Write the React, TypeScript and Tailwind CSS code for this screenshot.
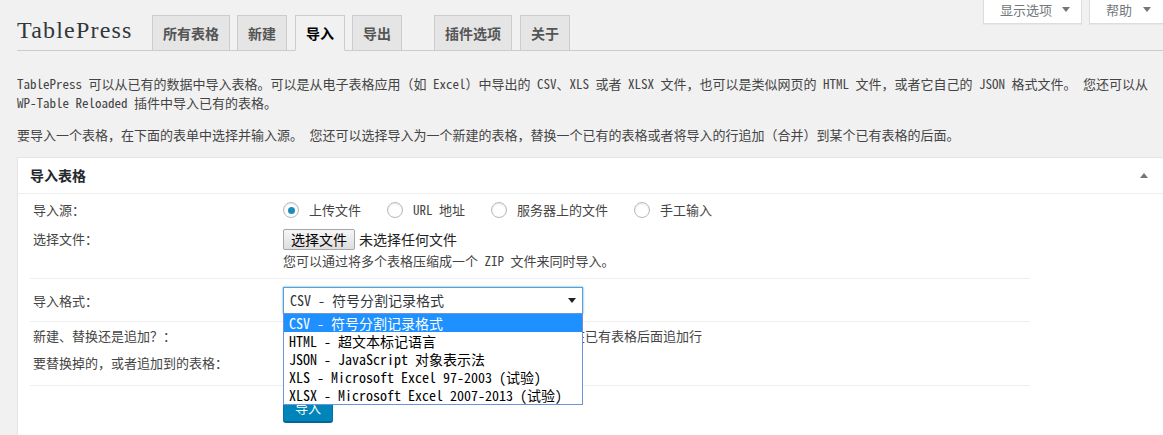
const mono = "font-['Noto_Sans_Mono_CJK_SC','Liberation_Mono','Noto_Sans_CJK_SC',monospace]";
const sans = "font-['Noto_Sans_CJK_SC','Noto_Sans',sans-serif]";

const tabs = [
    { label: "所有表格", gap: "ml-0" },
    { label: "新建", gap: "ml-[7px]" },
    { label: "导入", gap: "ml-[8px]", active: true },
    { label: "导出", gap: "ml-[7px]" },
    { label: "插件选项", gap: "ml-[32px]" },
    { label: "关于", gap: "ml-[8px]" },
];

const formats = [
    "CSV - 符号分割记录格式",
    "HTML - 超文本标记语言",
    "JSON - JavaScript 对象表示法",
    "XLS - Microsoft Excel 97-2003 (试验)",
    "XLSX - Microsoft Excel 2007-2013 (试验)",
];

const Radio = ({ checked = false }: { checked?: boolean }) => (
    <span className="w-[16px] h-[16px] shrink-0 rounded-full border border-[#b4b9be] bg-white shadow-[inset_0_1px_2px_rgba(0,0,0,0.1)] flex items-center justify-center">
        {checked && <span className="w-[7px] h-[7px] rounded-full bg-[#1e8cbe]" />}
    </span>
);

const RadioGroup = ({ items, gaps, checkFirst = false }: { items: string[]; gaps: string[]; checkFirst?: boolean }) => (
    <div className="flex items-center">
        {items.map((item, i) => (
            <div key={item} className={`flex items-center ${gaps[i]}`}>
                <Radio checked={checkFirst && i === 0} />
                <span className="ml-[10px] whitespace-nowrap">{item}</span>
            </div>
        ))}
    </div>
);

const Caret = ({ up = false }: { up?: boolean }) => (
    <svg width="8" height="5" viewBox="0 0 8 5" className="shrink-0">
        <path d={up ? "M0 5 L4 0 L8 5 Z" : "M0 0 L8 0 L4 5 Z"} fill="#72777c" />
    </svg>
);

const Label = ({ children }: { children: React.ReactNode }) => (
    <div className="w-[253px] shrink-0 pl-[3px] whitespace-nowrap">{children}</div>
);

export default function App() {
    return (
        <div className={`${mono} w-full h-[435px] overflow-hidden bg-[#f1f1f1] text-[13px] text-[#444]`}>
            {/* top bar: title, tabs and screen options */}
            <div className="ml-[17px] h-[51px] flex items-end border-b border-[#ccc]">
                <h1 className="self-start mt-[18px] w-[135px] shrink-0 h-[24px] leading-[24px] text-[24px] tracking-[1.2px] font-normal text-[#32373c] font-['Liberation_Serif',serif]">
                    TablePress
                </h1>
                {tabs.map((tab) => (
                    <div
                        key={tab.label}
                        className={`${tab.gap} ${sans} h-[36px] mb-[-1px] px-[10px] flex items-center border border-[#ccc] text-[14px] font-bold ${
                            tab.active ? "bg-[#f1f1f1] border-b-[#f1f1f1] text-black" : "bg-[#e5e5e5] text-[#555]"
                        }`}
                    >
                        {tab.label}
                    </div>
                ))}
                <div className="ml-auto self-start flex mr-[-3px]">
                    <div className="w-[99px] h-[24px] pl-[16px] pt-[1px] flex items-start gap-[10px] bg-white border border-t-0 border-[#ddd] shadow-[0_1px_1px_rgba(0,0,0,0.04)] text-[#72777c] leading-[17px]">
                        <span>显示选项</span>
                        <span className="mt-[6px]"><Caret /></span>
                    </div>
                    <div className="ml-[7px] w-[77px] h-[24px] pl-[16px] pt-[1px] flex items-start gap-[11px] bg-white border border-t-0 border-[#ddd] shadow-[0_1px_1px_rgba(0,0,0,0.04)] text-[#72777c] leading-[17px]">
                        <span>帮助</span>
                        <span className="mt-[6px]"><Caret /></span>
                    </div>
                </div>
            </div>

            <div className="pl-[17px]">
                <p className="mt-[23px] leading-[19px] whitespace-nowrap">
                    TablePress 可以从已有的数据中导入表格。可以是从电子表格应用（如 Excel）中导出的 CSV、XLS 或者 XLSX 文件，也可以是类似网页的 HTML 文件，或者它自己的 JSON 格式文件。 您还可以从
                    <br />
                    WP-Table Reloaded 插件中导入已有的表格。
                </p>
                <p className="mt-[13px] leading-[19px] whitespace-nowrap">
                    要导入一个表格，在下面的表单中选择并输入源。 您还可以选择导入为一个新建的表格，替换一个已有的表格或者将导入的行追加（合并）到某个已有表格的后面。
                </p>

                {/* postbox */}
                <div className="mt-[13px] w-[1160px] bg-white border border-[#e5e5e5] shadow-[0_1px_1px_rgba(0,0,0,0.04)]">
                    <div className="h-[36px] pl-[12px] pr-[28px] flex items-center justify-between border-b border-[#eee]">
                        <h2 className={`${sans} text-[14px] font-bold text-[#23282d]`}>导入表格</h2>
                        <Caret up />
                    </div>

                    <div className="pl-[12px]">
                        <div className="w-[1000px]">
                            <div className="pt-[5px] pb-[8px] border-b border-[#eee]">
                                <div className="h-[22px] flex items-center">
                                    <Label>导入源：</Label>
                                    <RadioGroup
                                        checkFirst
                                        items={["上传文件", "URL 地址", "服务器上的文件", "手工输入"]}
                                        gaps={["ml-0", "ml-[26px]", "ml-[26px]", "ml-[26px]"]}
                                    />
                                </div>
                                <div className="mt-[7px] h-[22px] flex items-center">
                                    <Label>选择文件：</Label>
                                    <div className={`${sans} flex items-center text-[14px] text-[#222]`}>
                                        <button className="w-[72px] h-[21px] leading-[19px] rounded-[2px] border border-[#a6a6a6] bg-gradient-to-b from-[#f6f6f6] to-[#dedede] text-black">
                                            选择文件
                                        </button>
                                        <span className="ml-[4px]">未选择任何文件</span>
                                    </div>
                                </div>
                                <div className="mt-[2px] h-[18px] leading-[18px] pl-[253px] whitespace-nowrap">
                                    您可以通过将多个表格压缩成一个 ZIP 文件来同时导入。
                                </div>
                            </div>

                            <div className="pt-[8px] pb-[7px] border-b border-[#eee]">
                                <div className="h-[27px] flex items-center">
                                    <Label>导入格式：</Label>
                                    <div className="relative z-10">
                                        <div className="w-[300px] h-[27px] pl-[6px] pr-[6px] flex items-center justify-between border border-[#5b9dd9] shadow-[0_0_2px_rgba(30,140,190,0.8)] bg-white text-[14px] text-[#32373c]">
                                            <span>{formats[0]}</span>
                                            <svg width="8" height="5" viewBox="0 0 8 5">
                                                <path d="M0 0 L8 0 L4 5 Z" fill="#222" />
                                            </svg>
                                        </div>
                                        <div className="absolute left-0 top-[26px] w-[300px] bg-white border border-[#6d94d6] text-[14px] text-black">
                                            {formats.map((f, i) => (
                                                <div
                                                    key={f}
                                                    className={`h-[18px] leading-[18px] pl-[5px] whitespace-nowrap ${i === 0 ? "bg-[#1e90ff] text-white" : ""}`}
                                                >
                                                    {f}
                                                </div>
                                            ))}
                                        </div>
                                    </div>
                                </div>
                            </div>

                            <div className="pt-[3px] pb-[11px] border-b border-[#eee]">
                                <div className="h-[22px] flex items-center">
                                    <Label>新建、替换还是追加？：</Label>
                                    <RadioGroup
                                        items={["新建表格", "替换一个已有表格", "在已有表格后面追加行"]}
                                        gaps={["ml-0", "ml-[26px]", "ml-[29px]"]}
                                    />
                                </div>
                                <div className="mt-[5px] h-[22px] flex items-center">
                                    <Label>要替换掉的，或者追加到的表格：</Label>
                                    <div className="w-[250px] h-[22px] border border-[#ddd] bg-white" />
                                </div>
                            </div>

                            <div className="pt-[8px] pb-[20px] pl-[253px]">
                                <button className={`${sans} w-[50px] h-[28px] rounded-[3px] border border-[#0073aa] border-b-[#006799] bg-[#0085ba] shadow-[0_1px_0_#006799] text-white text-[13px]`}>
                                    导入
                                </button>
                            </div>
                        </div>
                    </div>
                </div>
            </div>
        </div>
    );
}
